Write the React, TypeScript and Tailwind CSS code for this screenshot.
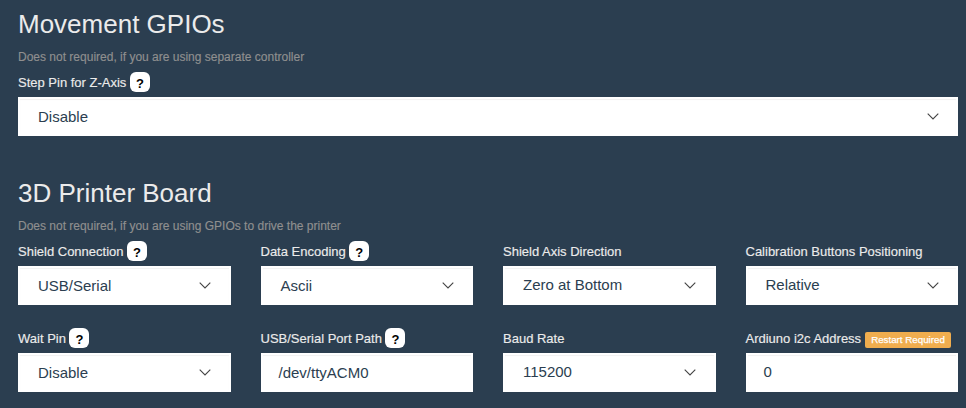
import type { ReactNode } from "react";

function Help() {
  return (
    <span className="-ml-[0.5px] flex h-5 w-5 items-center justify-center rounded-md bg-white pt-[3px] text-[13px] font-bold leading-none text-black">
      ?
    </span>
  );
}

function Chevron() {
  return (
    <svg className="mr-[17.5px] h-[7px] w-3 shrink-0" viewBox="0 0 12 7" fill="none" stroke="#444" strokeWidth="1.1">
      <path d="M0.7 0.7 6 6 11.3 0.7" />
    </svg>
  );
}

type FieldProps = {
  label: string;
  value: string;
  help?: boolean;
  input?: boolean;
  raised?: boolean;
  badge?: ReactNode;
};

function Field({ label, value, help, input, raised, badge }: FieldProps) {
  return (
    <div className="min-w-0">
      <div className="flex h-5 items-center gap-1 whitespace-nowrap text-[13px] text-[#ebebeb]">
        <span className="pt-0.5 [-webkit-text-stroke:0.15px]">{label}</span>
        {help && <Help />}
        {badge}
      </div>
      <div
        className={`mt-[5px] flex h-[39px] items-center justify-between border-2 border-white bg-white text-[15px] text-[#2b3e50] shadow-[inset_0_1px_1px_rgba(0,0,0,0.06)] ${input ? "pl-4" : "pl-[18px]"}`}
      >
        <span className={raised ? "" : "pt-0.5"}>{value}</span>
        {!input && <Chevron />}
      </div>
    </div>
  );
}

function SectionTitle({ title, hint }: { title: string; hint: string }) {
  return (
    <>
      <h2 className="h-[30px] text-[26px] leading-[30px] text-[#ebebeb]">{title}</h2>
      <p className="mt-[10px] mb-[7px] h-4 text-xs leading-4 text-[#8f8f8f] [-webkit-text-stroke:0.15px]">{hint}</p>
    </>
  );
}

export default function App() {
  return (
    <main className="h-[408px] w-[966px] overflow-hidden bg-[#2b3e50] pt-[9px] pr-2 pl-[18px] font-['Liberation_Sans',Arial,sans-serif]">
      <section>
        <SectionTitle title="Movement GPIOs" hint="Does not required, if you are using separate controller" />
        <Field label="Step Pin for Z-Axis" value="Disable" help />
      </section>
      <section className="mt-[42px]">
        <SectionTitle title="3D Printer Board" hint="Does not required, if you are using GPIOs to drive the printer" />
        <div className="grid grid-cols-4 gap-x-[30px] gap-y-[23px]">
          <Field label="Shield Connection" value="USB/Serial" help />
          <Field label="Data Encoding" value="Ascii" help />
          <Field label="Shield Axis Direction" value="Zero at Bottom" raised />
          <Field label="Calibration Buttons Positioning" value="Relative" raised />
          <Field label="Wait Pin" value="Disable" help />
          <Field label="USB/Serial Port Path" value="/dev/ttyACM0" help input />
          <Field label="Baud Rate" value="115200" raised />
          <Field
            label="Ardiuno i2c Address"
            value="0"
            input
            raised
            badge={
              <span className="mt-[3px] flex h-4 items-center rounded-[2px] bg-[#f0ad4e] px-1.5 text-[9.75px] leading-none text-white [-webkit-text-stroke:0.25px]">
                Restart Required
              </span>
            }
          />
        </div>
      </section>
    </main>
  );
}
